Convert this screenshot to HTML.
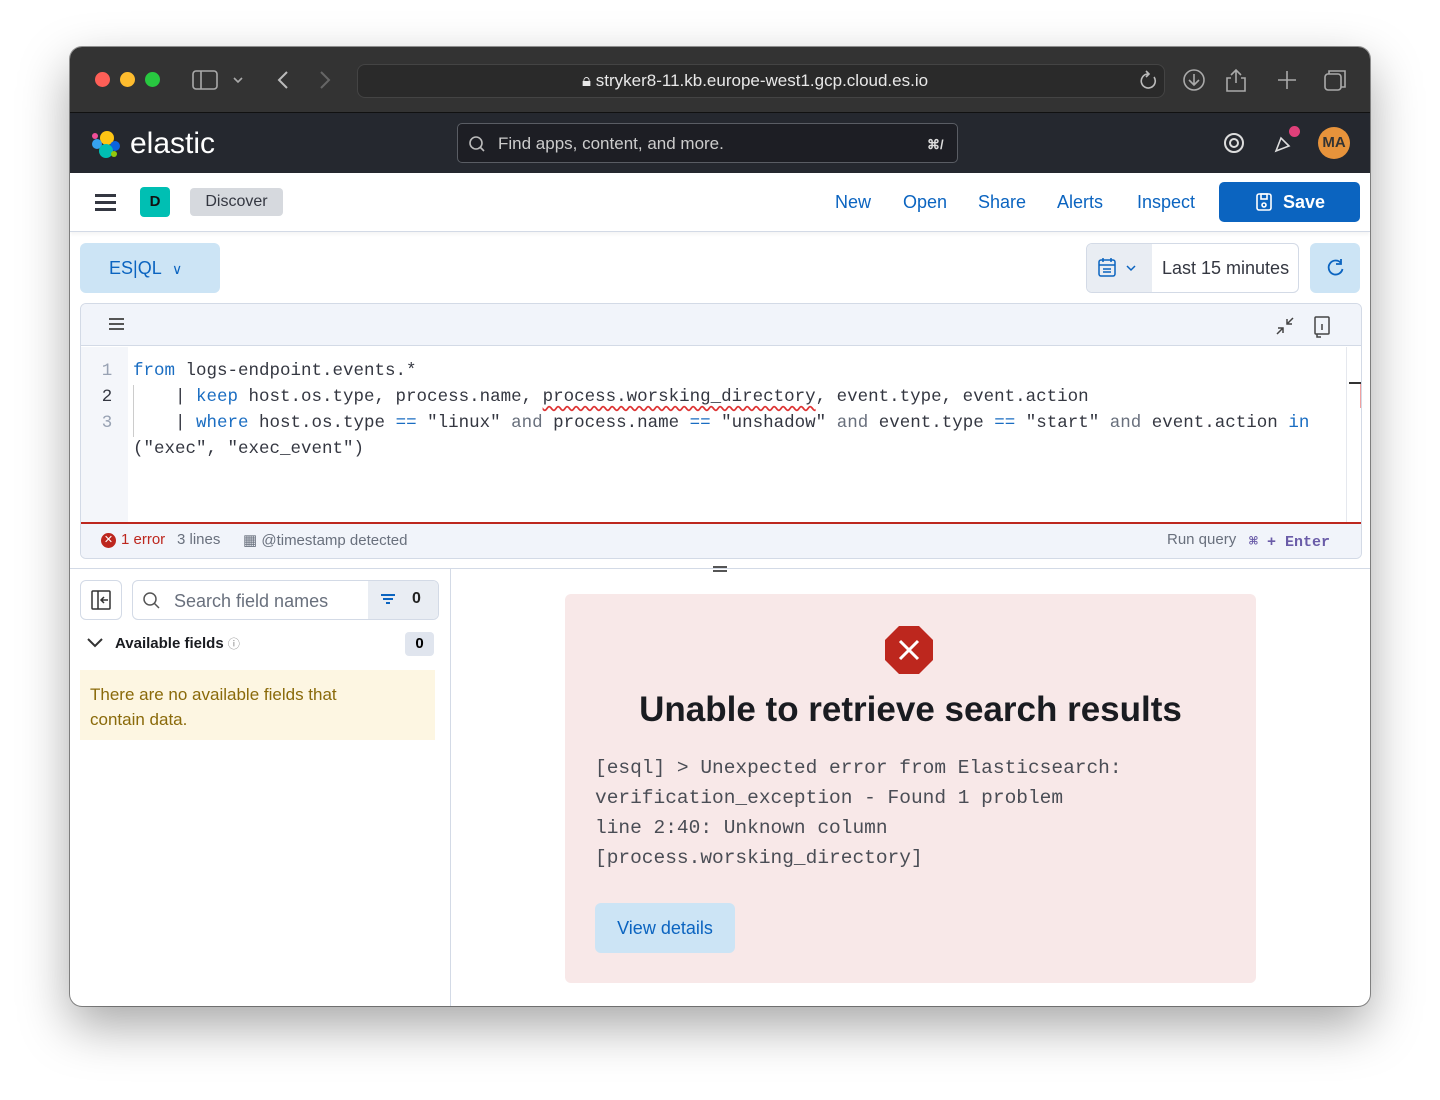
<!DOCTYPE html>
<html><head><meta charset="utf-8"><style>
*{box-sizing:border-box;margin:0;padding:0}
body{width:1440px;height:1100px;background:#fff;font-family:"Liberation Sans",sans-serif;position:relative;overflow:hidden}
.a{position:absolute}
.win{left:70px;top:47px;width:1300px;height:959px;border-radius:12px;overflow:hidden;background:#fff;box-shadow:0 20px 50px rgba(0,0,0,.35),0 0 0 1px rgba(0,0,0,.4)}
.mono{font-family:"Liberation Mono",monospace}
.kw{color:#1a6dc2}
.blue{color:#0b64c0}
</style></head><body>
<div class="a win">
 <div class="a" style="left:0;top:0;width:1300px;height:66px;background:#333333;border-bottom:1px solid #111"></div>
 <div class="a" style="left:25px;top:25px;width:15px;height:15px;border-radius:50%;background:#fe5f57"></div>
 <div class="a" style="left:50px;top:25px;width:15px;height:15px;border-radius:50%;background:#febc2e"></div>
 <div class="a" style="left:75px;top:25px;width:15px;height:15px;border-radius:50%;background:#28c840"></div>
 <svg class="a" style="left:120px;top:20px" width="60" height="26" fill="none" stroke="#aaa" stroke-width="1.6"><rect x="3" y="4" width="24" height="18" rx="3"/><line x1="11" y1="4" x2="11" y2="22"/><path d="M44 11l4 4 4-4"/></svg>
 <svg class="a" style="left:200px;top:20px" width="70" height="26" fill="none" stroke-width="2"><path d="M17 5l-8 8 8 8" stroke="#bbb"/><path d="M51 5l8 8-8 8" stroke="#666"/></svg>
 <div class="a" style="left:287px;top:17px;width:808px;height:34px;border-radius:8px;background:#2a2a2a;border:1px solid #444"></div>
 <div class="a" style="left:512px;top:24px;color:#e8e8e8;font-size:17px">🔒︎ stryker8-11.kb.europe-west1.gcp.cloud.es.io</div>
 <svg class="a" style="left:1068px;top:22px" width="22" height="24" fill="none" stroke="#bbb" stroke-width="1.6"><path d="M16 8a7 7 0 1 1-6-3"/><path d="M8 2l3 3-3 3"/></svg>
 <svg class="a" style="left:1110px;top:18px" width="240" height="30" fill="none" stroke="#aaa" stroke-width="1.6"><circle cx="14" cy="15" r="10"/><path d="M14 9v11M9 15l5 5 5-5"/><path d="M56 6v12M51 10l5-5 5 5M51 13h-4v13h18V13h-4"/><path d="M107 6v18M98 15h18"/><rect x="145" y="9" width="16" height="16" rx="3"/><path d="M149 9V6h16v16h-4"/></svg>
 <div class="a" style="left:0;top:66px;width:1300px;height:60px;background:#25282f"></div>
 <svg class="a" style="left:19px;top:80px" width="34" height="34"><circle cx="18" cy="11" r="7" fill="#fec514"/><circle cx="8" cy="17" r="5" fill="#36a2ef"/><circle cx="26" cy="19" r="5" fill="#0b64dd"/><circle cx="17" cy="24" r="7" fill="#00bfb3"/><circle cx="6" cy="9" r="3" fill="#f04e98"/><circle cx="25" cy="27" r="3" fill="#93c90e"/></svg>
 <div class="a" style="left:60px;top:80px;color:#fff;font-size:30px">elastic</div>
 <div class="a" style="left:387px;top:76px;width:501px;height:40px;border-radius:5px;border:1px solid #5a5d64;background:#1d1e24"></div>
 <svg class="a" style="left:397px;top:87px" width="20" height="20" fill="none" stroke="#bbb" stroke-width="1.6"><circle cx="9" cy="9" r="6"/><path d="M13 13l4 4"/></svg>
 <div class="a" style="left:428px;top:87px;color:#ccc;font-size:17px">Find apps, content, and more.</div>
 <div class="a" style="left:857px;top:90px;color:#ddd;font-size:13px;font-weight:bold">⌘/</div>
 <svg class="a" style="left:1152px;top:84px" width="24" height="24" fill="none" stroke="#ddd" stroke-width="2"><circle cx="12" cy="12" r="9"/><circle cx="12" cy="12" r="4"/></svg>
 <svg class="a" style="left:1202px;top:84px" width="24" height="24" fill="none" stroke="#ddd" stroke-width="1.6"><path d="M4 20l5-13 8 8z"/></svg>
 <div class="a" style="left:1219px;top:79px;width:11px;height:11px;border-radius:50%;background:#e0407a"></div>
 <div class="a" style="left:1248px;top:80px;width:32px;height:32px;border-radius:50%;background:#e7933b;color:#333;font-size:15px;text-align:center;line-height:32px;font-weight:bold">MA</div>
 <div class="a" style="left:0;top:126px;width:1300px;height:59px;background:#fff;border-bottom:1px solid #d3dae6;box-shadow:0 2px 4px rgba(0,0,0,.05)"></div>
 <div class="a" style="left:25px;top:147px;width:21px;height:3px;background:#343741;box-shadow:0 7px 0 #343741,0 14px 0 #343741"></div>
 <div class="a" style="left:70px;top:140px;width:30px;height:30px;border-radius:4px;background:#00bfb3;color:#111;font-size:15px;text-align:center;line-height:30px;font-weight:bold">D</div>
 <div class="a" style="left:120px;top:141px;width:93px;height:28px;border-radius:4px;background:#d6d9de;color:#343741;font-size:16px;text-align:center;line-height:28px">Discover</div>
 <div class="a blue" style="left:765px;top:145px;font-size:18px">New</div>
 <div class="a blue" style="left:833px;top:145px;font-size:18px">Open</div>
 <div class="a blue" style="left:908px;top:145px;font-size:18px">Share</div>
 <div class="a blue" style="left:987px;top:145px;font-size:18px">Alerts</div>
 <div class="a blue" style="left:1067px;top:145px;font-size:18px">Inspect</div>
 <div class="a" style="left:1149px;top:135px;width:141px;height:40px;border-radius:5px;background:#0b64c0;color:#fff;font-size:18px;font-weight:bold;line-height:40px;padding-left:64px">Save</div>
 <svg class="a" style="left:1184px;top:145px" width="20" height="20" fill="none" stroke="#fff" stroke-width="1.6"><rect x="3" y="2" width="14" height="16" rx="2"/><rect x="7" y="2" width="6" height="5"/><circle cx="10" cy="13" r="2"/></svg>
 <div class="a" style="left:10px;top:196px;width:140px;height:50px;border-radius:6px;background:#cce4f5;color:#0b64c0;font-size:18px;line-height:50px;padding-left:29px">ES|QL <span style="font-size:14px;margin-left:6px">∨</span></div>
 <div class="a" style="left:1016px;top:196px;width:213px;height:50px;border-radius:6px;border:1px solid #d3dae6;background:#fff"></div>
 <div class="a" style="left:1017px;top:197px;width:65px;height:48px;border-radius:5px 0 0 5px;background:#e9edf3"></div>
 <svg class="a" style="left:1027px;top:210px" width="46" height="22" fill="none" stroke="#0b64c0" stroke-width="1.5"><rect x="2" y="3" width="16" height="16" rx="2"/><path d="M2 8h16M6 1v4M14 1v4M6 12h8M6 15h8"/><path d="M30 9l4 4 4-4"/></svg>
 <div class="a" style="left:1092px;top:211px;color:#343741;font-size:18px">Last 15 minutes</div>
 <div class="a" style="left:1240px;top:196px;width:50px;height:50px;border-radius:6px;background:#cce4f5"></div>
 <svg class="a" style="left:1254px;top:210px" width="22" height="22" fill="none" stroke="#0b64c0" stroke-width="1.8"><path d="M17 6a7 7 0 1 0 1.5 6"/><path d="M17 2v5h-5"/></svg>
 <div class="a" style="left:10px;top:256px;width:1282px;height:256px;border:1px solid #d3dae6;border-radius:6px;background:#fff;overflow:hidden">
  <div class="a" style="left:0;top:0;width:1282px;height:42px;background:#f1f4fa;border-bottom:1px solid #d3dae6"></div>
  <div class="a" style="left:28px;top:14px;width:15px;height:2px;background:#555;box-shadow:0 5px 0 #555,0 10px 0 #555"></div>
  <svg class="a" style="left:1194px;top:10px" width="64" height="24" fill="none" stroke="#444" stroke-width="1.5"><path d="M2 20l6-6M3 14h5v5M18 4l-6 6M12 5v5h5"/><rect x="40" y="3" width="14" height="17" rx="1"/><path d="M47 8v0M47 10v6M42 20v3h4"/></svg>
  <div class="a" style="left:0;top:43px;width:47px;height:176px;background:#f4f6fa"></div>
  <div class="a" style="left:1265px;top:43px;width:1px;height:176px;background:#e5e8ee"></div>
  <div class="a" style="left:1268px;top:78px;width:12px;height:2px;background:#333"></div>
  <div class="a" style="left:1279px;top:80px;width:2px;height:24px;background:#f0a0a0"></div>
  <div class="a mono" style="left:0;top:54px;font-size:17.5px;line-height:26px;color:#343741;white-space:pre"><div><span style="display:inline-block;width:52px;color:#98a2b3;text-align:center">1</span><span class="kw">from</span> logs-endpoint.events.*</div><div><span style="display:inline-block;width:52px;color:#343741;text-align:center">2</span>    | <span class="kw">keep</span> host.os.type, process.name, <span style="text-decoration:underline wavy #d33;text-underline-offset:4px">process.worsking_directory</span>, event.type, event.action</div><div><span style="display:inline-block;width:52px;color:#98a2b3;text-align:center">3</span>    | <span class="kw">where</span> host.os.type <span class="kw">==</span> "linux" <span style="color:#69707d">and</span> process.name <span class="kw">==</span> "unshadow" <span style="color:#69707d">and</span> event.type <span class="kw">==</span> "start" <span style="color:#69707d">and</span> event.action <span class="kw">in</span></div><div><span style="display:inline-block;width:52px"></span>("exec", "exec_event")</div></div>
  <div class="a" style="left:52px;top:81px;width:1px;height:52px;background:#ccc"></div>
  <div class="a" style="left:0;top:218px;width:1282px;height:2px;background:#bd271e"></div>
  <div class="a" style="left:0;top:220px;width:1282px;height:36px;background:#f1f4fa"></div>
  <div class="a" style="left:20px;top:229px;width:15px;height:15px;border-radius:50%;background:#bd271e;color:#fff;font-size:11px;text-align:center;line-height:15px">✕</div>
  <div class="a" style="left:40px;top:227px;font-size:15px;color:#bd271e">1 error</div>
  <div class="a" style="left:96px;top:227px;font-size:15px;color:#69707d">3 lines</div>
  <div class="a" style="left:162px;top:227px;font-size:15px;color:#69707d">▦ @timestamp detected</div>
  <div class="a" style="left:1086px;top:227px;font-size:15px;color:#69707d">Run query</div>
  <div class="a mono" style="left:1168px;top:228px;font-size:15px;color:#6a5ca8;font-weight:bold">⌘ + Enter</div>
 </div>
 <div class="a" style="left:0;top:521px;width:1300px;height:1px;background:#d3dae6"></div>
 <div class="a" style="left:643px;top:519px;width:14px;height:2px;background:#555;box-shadow:0 4px 0 #555"></div>
 <div class="a" style="left:380px;top:522px;width:1px;height:437px;background:#d3dae6"></div>
 <div class="a" style="left:10px;top:533px;width:42px;height:40px;border:1px solid #d3dae6;border-radius:6px"></div>
 <svg class="a" style="left:20px;top:542px" width="22" height="22" fill="none" stroke="#333" stroke-width="1.5"><rect x="2" y="2" width="18" height="18" rx="1"/><path d="M8 2v18M18 11h-7M14 8l-3 3 3 3"/></svg>
 <div class="a" style="left:62px;top:533px;width:307px;height:40px;border:1px solid #d3dae6;border-radius:6px;background:#fff"></div>
 <div class="a" style="left:298px;top:534px;width:70px;height:38px;background:#e9edf3;border-radius:0 5px 5px 0"></div>
 <svg class="a" style="left:72px;top:544px" width="20" height="20" fill="none" stroke="#555" stroke-width="1.5"><circle cx="8" cy="8" r="6"/><path d="M12 12l5 5"/></svg>
 <div class="a" style="left:104px;top:544px;font-size:18px;color:#69707d">Search field names</div>
 <div class="a" style="left:311px;top:547px;width:14px;height:2px;background:#0b64c0"></div>
 <div class="a" style="left:313px;top:551px;width:10px;height:2px;background:#0b64c0"></div>
 <div class="a" style="left:316px;top:555px;width:4px;height:2px;background:#0b64c0"></div>
 <div class="a" style="left:342px;top:543px;font-size:16px;color:#222;font-weight:bold">0</div>
 <svg class="a" style="left:16px;top:589px" width="18" height="14" fill="none" stroke="#333" stroke-width="2"><path d="M2 3l7 7 7-7"/></svg>
 <div class="a" style="left:45px;top:588px;font-size:15px;font-weight:bold;color:#1a1c21">Available fields <span style="font-weight:normal;color:#888;font-size:12px">ⓘ</span></div>
 <div class="a" style="left:335px;top:585px;width:29px;height:24px;border-radius:4px;background:#e0e5ee;text-align:center;line-height:24px;font-size:15px;font-weight:bold">0</div>
 <div class="a" style="left:10px;top:623px;width:355px;height:70px;background:#fdf6e2;padding:12px 70px 12px 10px;font-size:17px;line-height:25px;color:#8a6a0a">There are no available fields that contain data.</div>
 <div class="a" style="left:495px;top:547px;width:691px;height:389px;border-radius:6px;background:#f8e8e8"></div>
 <svg class="a" style="left:814px;top:578px" width="50" height="50"><polygon points="15,1 35,1 49,15 49,35 35,49 15,49 1,35 1,15" fill="#bd271e"/><path d="M16 16l18 18M34 16L16 34" stroke="#fff" stroke-width="3"/></svg>
 <div class="a" style="left:495px;top:643px;width:691px;text-align:center;font-size:35px;font-weight:bold;color:#1a1c21">Unable to retrieve search results</div>
 <div class="a mono" style="left:525px;top:706px;font-size:19.5px;line-height:30px;color:#4a4d55;white-space:pre">[esql] &gt; Unexpected error from Elasticsearch:
verification_exception - Found 1 problem
line 2:40: Unknown column
[process.worsking_directory]</div>
 <div class="a" style="left:525px;top:856px;width:140px;height:50px;border-radius:6px;background:#cce4f5;color:#0b64c0;font-size:18px;text-align:center;line-height:50px">View details</div>
</div>
</body></html>
